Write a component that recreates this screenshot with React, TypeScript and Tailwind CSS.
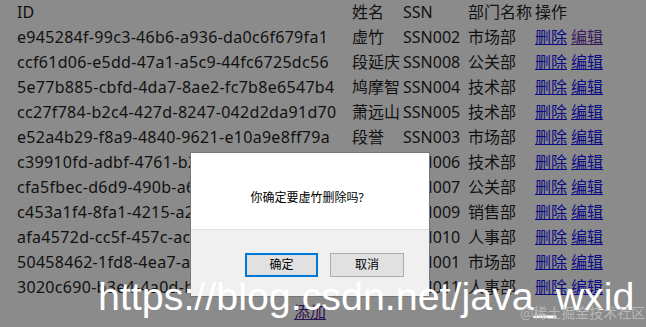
import React from "react";

const rows: [string, string, string, string][] = [
  ["e945284f-99c3-46b6-a936-da0c6f679fa1", "虚竹", "SSN002", "市场部"],
  ["ccf61d06-e5dd-47a1-a5c9-44fc6725dc56", "段延庆", "SSN008", "公关部"],
  ["5e77b885-cbfd-4da7-8ae2-fc7b8e6547b4", "鸠摩智", "SSN004", "技术部"],
  ["cc27f784-b2c4-427d-8247-042d2da91d70", "萧远山", "SSN005", "技术部"],
  ["e52a4b29-f8a9-4840-9621-e10a9e8ff79a", "段誉", "SSN003", "市场部"],
  ["c39910fd-adbf-4761-b2d1-7a4f0c1e9b35", "乔峰", "SSN006", "技术部"],
  ["cfa5fbec-d6d9-490b-a6e2-3c8d1f5b7a20", "阿朱", "SSN007", "公关部"],
  ["c453a1f4-8fa1-4215-a2c7-9e0b4d6f1a83", "阿紫", "SSN009", "销售部"],
  ["afa4572d-cc5f-457c-ac31-5d7e2b9f0c64", "王语嫣", "SSN010", "人事部"],
  ["50458462-1fd8-4ea7-a9b3-0f6c2e8d4a17", "慕容复", "SSN001", "市场部"],
  ["3020c690-b3e4-4a0d-b5f1-8c2a7d9e6b40", "钟灵", "SSN011", "人事部"],
];

const font = { fontFamily: '"Noto Sans", "Noto Sans CJK SC", sans-serif' };

export default function App() {
  return (
    <div className="relative w-[646px] h-[327px] overflow-hidden bg-[#8b8b8b] text-[#111111]" style={font}>
      <div className="ml-[17px] w-[586px] text-[16px] leading-[25px]">
        <div className="grid grid-cols-[335px_51px_65px_67px_68px] h-[25px]">
          <div>ID</div>
          <div>姓名</div>
          <div>SSN</div>
          <div className="whitespace-nowrap">部门名称</div>
          <div>操作</div>
        </div>
        {rows.map((r, i) => (
          <div key={i} className="grid grid-cols-[335px_51px_65px_67px_68px] h-[25px]">
            <div className="whitespace-nowrap overflow-hidden tracking-[0.3px]">{r[0]}</div>
            <div className="whitespace-nowrap">{r[1]}</div>
            <div>{r[2]}</div>
            <div>{r[3]}</div>
            <div className="flex gap-[4px] whitespace-nowrap">
              <span className="underline text-[#0b0a86]">删除</span>
              <span className={i === 0 ? "underline text-[#3a1a5e]" : "underline text-[#0b0a86]"}>编辑</span>
            </div>
          </div>
        ))}
        <div className="h-[25px] flex justify-center">
          <span className="underline text-[#2a1250]">添加</span>
        </div>
      </div>

      {/* confirm dialog */}
      <div className="absolute left-[190px] top-[152px] w-[240px] h-[145px] border border-[#767676] bg-white flex flex-col text-[12px] text-black">
        <div className="h-[76px] flex items-center justify-center pr-[6px] pt-[14px]">你确定要虚竹删除吗?</div>
        <div className="flex-1 bg-[#f0f0f0] border-t border-[#dfdfdf] flex justify-end items-start pt-[23px] pr-[25px] gap-[12px]">
          <div className="w-[73px] h-[24px] bg-[#e1e1e1] border-2 border-[#0078d7] flex items-center justify-center">确定</div>
          <div className="w-[74px] h-[24px] bg-[#e1e1e1] border border-[#adadad] flex items-center justify-center">取消</div>
        </div>
      </div>

      {/* watermark */}
      <div
        className="absolute left-[98px] top-[276px] text-[39.4px] leading-[40px] text-white whitespace-nowrap"
        style={{ fontFamily: '"Liberation Sans", Arial, sans-serif' }}
      >
        https://blog.csdn.net/java_wxid
      </div>
      <div
        className="absolute left-[520px] top-[303px] text-[14px] leading-[18px] text-[#b8b8b8] whitespace-nowrap"
        style={{ fontFamily: '"Noto Sans CJK SC", sans-serif' }}
      >
        @稀土掘金技术社区
      </div>
    </div>
  );
}
